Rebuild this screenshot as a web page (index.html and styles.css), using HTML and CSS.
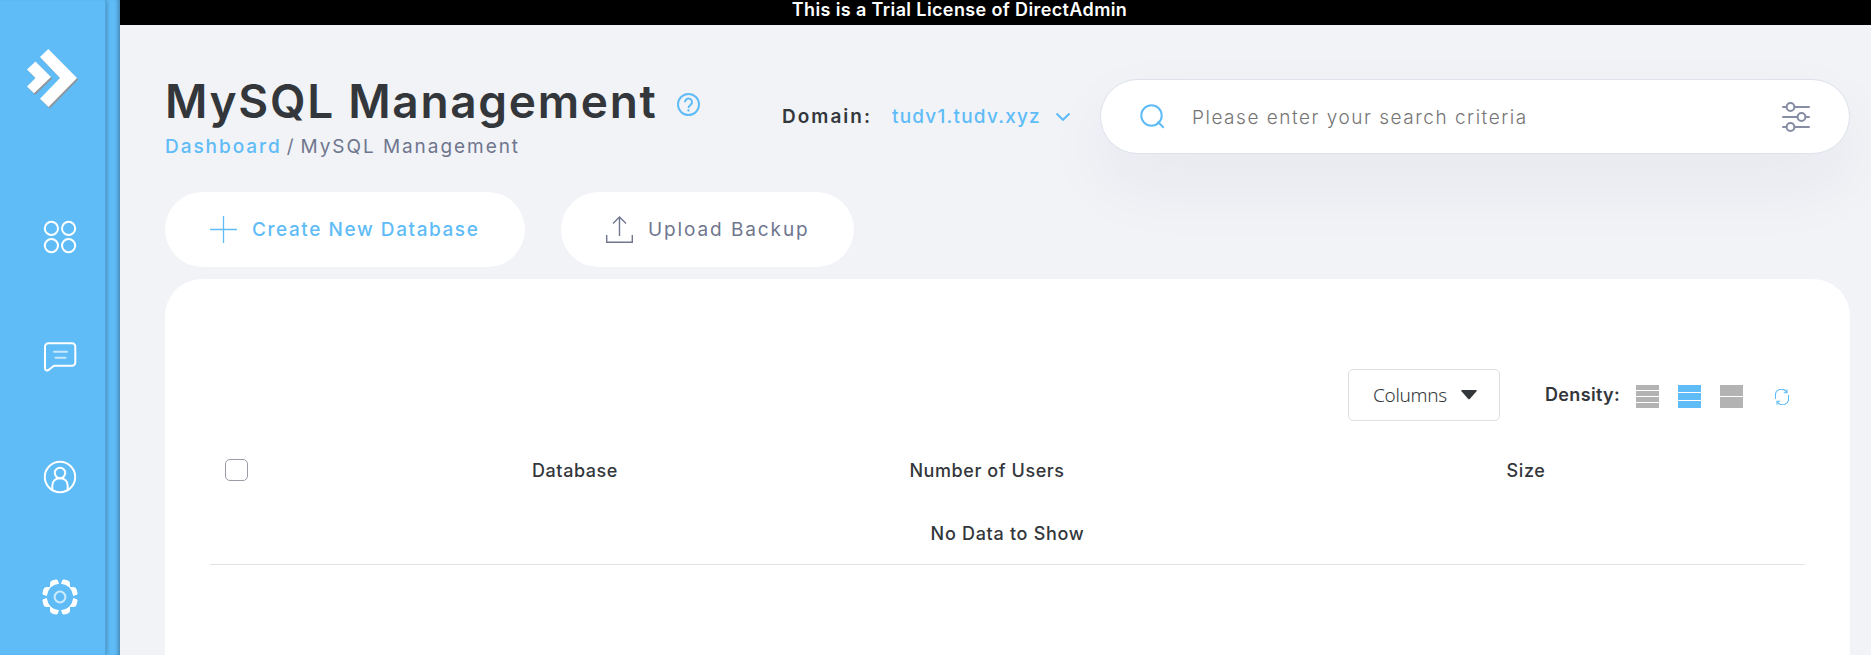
FILE: index.html
```html
<!DOCTYPE html>
<html lang="en">
<head>
<meta charset="utf-8">
<title>MySQL Management</title>
<link rel="stylesheet" href="styles.css">
</head>
<body>
<div class="app">
  <aside class="sidebar">
    <nav class="rail">
      <svg class="logo" width="54" height="63" viewBox="0 0 54 63">
        <g fill="#8f9599" transform="translate(1.2 1.5)"><path d="M23.3 2 52 31 23.5 60 15 51.7 35 31 15 10z"/><path d="M10.5 14.5 26 30 9 46.3 2 39.5 10.5 31 2 22.5z"/></g>
        <g fill="#fff"><path d="M23.3 2 52 31 23.5 60 15 51.7 35 31 15 10z"/><path d="M10.5 14.5 26 30 9 46.3 2 39.5 10.5 31 2 22.5z"/></g>
      </svg>
      <svg class="nav-icon" width="36" height="36" viewBox="0 0 36 36" fill="none" stroke="#fff" stroke-width="2"><circle cx="9.4" cy="9.4" r="6.6"/><circle cx="26.6" cy="9.4" r="6.6"/><circle cx="9.4" cy="26.6" r="6.6"/><circle cx="26.6" cy="26.6" r="6.6"/></svg>
      <svg class="nav-icon" width="36" height="36" viewBox="0 0 36 36" fill="none" stroke="#fff" stroke-width="2" stroke-linecap="round" stroke-linejoin="round"><path d="M6.5 4.300H30a3.300 3.300 0 0 1 3.300 3.300V23.400a3.300 3.300 0 0 1-3.300 3.300H12L6.500 31Q3 32.500 3 29V7.600A3.300 3.300 0 0 1 6.500 4.300z"/><path opacity=".65" d="M12 12.700h13M13.500 18.700h10"/></svg>
      <svg class="nav-icon" width="36" height="36" viewBox="0 0 36 36" fill="none" stroke="#fff" stroke-width="2"><circle cx="18" cy="18" r="15.200"/><circle cx="18" cy="14" r="5.200"/><path d="M10.300 30.500V27c0-4.800 3.200-7.800 7.700-7.800s7.700 3 7.700 7.800v3.500"/></svg>
      <svg class="nav-icon" width="36" height="36" viewBox="0 0 36 36" fill="none" stroke="#fff">
        <g fill="#fff" stroke="none"><path id="tooth" d="M19 4.800 20.300 1.200Q21 .3 22 .5L25.500 1.300Q28 2.200 28 4.200V8.800Q23.800 5.400 19 4.800z"/><use href="#tooth" transform="rotate(90 18 18)"/><use href="#tooth" transform="rotate(180 18 18)"/><use href="#tooth" transform="rotate(270 18 18)"/>
        <g transform="matrix(-1 0 0 1 36 0)"><use href="#tooth"/><use href="#tooth" transform="rotate(90 18 18)"/><use href="#tooth" transform="rotate(180 18 18)"/><use href="#tooth" transform="rotate(270 18 18)"/></g></g>
        <circle cx="18" cy="18" r="5.400" stroke-width="2" opacity=".7"/>
      </svg>
    </nav>
  </aside>
  <div class="page">
    <div class="license">This is a Trial License of DirectAdmin</div>
    <main class="main">
      <header class="head">
        <div class="heading">
          <div class="title-row">
            <h1 class="title">MySQL Management</h1>
            <svg class="help" width="24" height="24" viewBox="0 0 24 24" fill="none" stroke="#5fbcf7" stroke-width="2"><circle cx="11.500" cy="11.500" r="10.500"/><path d="M8 9.200a3.500 3.500 0 1 1 5.600 2.700c-1.200.9-2.100 1.500-2.100 3"/><path d="M11.500 16.300v2.200"/></svg>
          </div>
          <div class="crumbs"><a class="crumb-link">Dashboard</a><span>/</span><span class="crumb-here">MySQL Management</span></div>
        </div>
        <div class="domain">
          <span class="domain-label">Domain:</span>
          <span class="domain-value">tudv1.tudv.xyz</span>
          <svg width="16" height="10" viewBox="0 0 16 10" fill="none" stroke="#5fbcf7" stroke-width="2"><path d="m1.500 1.500 6.500 6.300 6.500-6.300"/></svg>
        </div>
        <div class="search">
          <svg width="25" height="25" viewBox="0 0 25 25" fill="none" stroke="#5fbcf7" stroke-width="2"><circle cx="11.500" cy="11.500" r="10.200"/><path d="m17.500 17.500 6.200 6.200"/></svg>
          <span class="search-text">Please enter your search criteria</span>
          <svg width="28" height="30" viewBox="0 0 28 30" fill="none" stroke="#858ca3" stroke-width="2" stroke-linecap="round"><path d="M1 5h3.500M12.500 5H27M1 15h14.500M23.500 15H27M1 25h3.500M12.500 25H27"/><circle cx="8.500" cy="5" r="3.900"/><circle cx="19.500" cy="15" r="3.900"/><circle cx="8.500" cy="25" r="3.900"/></svg>
        </div>
      </header>
      <div class="actions">
        <div class="action action-create">
          <svg width="27" height="27" viewBox="0 0 27 27" fill="none" stroke="#5fbcf7" stroke-width="1.300"><path d="M13.500 0v27M0 13.500h27"/></svg>
          <span>Create New Database</span>
        </div>
        <div class="action action-upload">
          <svg width="27" height="27" viewBox="0 0 27 27" fill="none" stroke="#6f768e" stroke-width="1.400"><path d="M.7 19v7.300h25.600V19M13.500 20V1M7 7.500 13.500 1 20 7.500"/></svg>
          <span>Upload Backup</span>
        </div>
      </div>
      <section class="card">
        <div class="tools">
          <div class="columns"><span class="columns-text">Columns</span><svg width="16" height="10" viewBox="0 0 16 10" fill="#33373b"><path d="M1 0h14q1.500 0 .5 1.300L9 8.800q-1 1-2 0L.5 1.300Q-.5 0 1 0z"/></svg></div>
          <span class="density">Density:</span>
          <div class="density-icons">
            <svg width="23" height="23" fill="#b3b3b3"><path d="M0 0h23v5H0zM0 6h23v5H0zM0 12h23v5H0zM0 18h23v5H0z"/></svg>
            <svg width="23" height="23" fill="#5fbcf7"><path d="M0 0h23v7H0zM0 8h23v7H0zM0 16h23v7H0z"/></svg>
            <svg width="23" height="23" fill="#b3b3b3"><path d="M0 0h23v11H0zM0 12h23v11H0z"/></svg>
          </div>
          <svg class="refresh" width="16" height="16" viewBox="0 0 16 16" fill="none" stroke="#5fbcf7" stroke-width="1.100"><path d="M1.500 10V7A6 6 0 0 1 12.500 3M13 .5v3.200H9.800M14.500 6V9A6 6 0 0 1 3.500 13M3 15.500V12.300h3.200"/></svg>
        </div>
        <div class="thead">
          <div class="cell-check"><span class="checkbox"></span></div>
          <div>Database</div>
          <div>Number of Users</div>
          <div>Size</div>
        </div>
        <div class="empty">No Data to Show</div>
      </section>
    </main>
  </div>
</div>
</body>
</html>
```
FILE: styles.css
```css
* { box-sizing: border-box; }
body { margin: 0; background: #f1f3f7; font-family: Inter, "Open Sans", sans-serif; font-size: 19px; color: #33373b; }
svg { display: block; flex: none; }
.app { display: flex; height: 655px; overflow: hidden; }
.sidebar { width: 120px; flex: none; background: #5fbcf7; box-shadow: inset -5px 0 5px -4px rgba(0,0,0,.4); }
.rail { width: 106px; height: 655px; padding: 47px 0 0 25px; display: flex; flex-direction: column; box-shadow: inset -1px 0 0 rgba(0,0,0,.12), 2px 0 4px -1px rgba(0,0,0,.25); }
.logo { margin-bottom: 109px; }
.nav-icon { margin: 0 0 84px 17px; }
.page { flex: 1; min-width: 0; }
.license { height: 25px; line-height: 20px; background: #000; color: #fff; text-align: center; padding-right: 72px; font-weight: 600; font-size: 18px; letter-spacing: .38px; }
.main { padding: 54px 21px 0 45px; }
.head { display: flex; height: 75px; white-space: nowrap; }
.heading { width: 617px; }
.title-row { display: flex; height: 44px; }
.title { margin: 0; width: 512px; font-size: 46px; line-height: 44px; font-weight: 600; letter-spacing: 1.7px; }
.help { margin-top: 14px; }
.crumbs { display: flex; gap: 5px; height: 24px; line-height: 24px; margin-top: 12px; color: #6f768e; letter-spacing: 1.95px; }
.crumb-link { color: #5fbcf7; font-weight: 500; }
.domain { width: 318px; display: flex; align-items: center; }
.domain-label { width: 110px; font-weight: 600; letter-spacing: 2px; }
.domain-value { width: 163px; color: #5fbcf7; font-weight: 500; letter-spacing: 1.2px; }
.search { width: 750px; height: 75px; border: 1px solid #dde1ea; border-radius: 38px; background: #fff; padding: 0 39px; display: flex; align-items: center; box-shadow: 0 30px 70px rgba(40,45,80,.055); }
.search-text { flex: 1; margin: 2px 0 0 27px; color: #757575; font-weight: 300; letter-spacing: 1.52px; }
.actions { display: flex; gap: 36px; margin-top: 38px; white-space: nowrap; }
.action { height: 75px; border-radius: 38px; background: #fff; padding-left: 45px; display: flex; align-items: center; gap: 15px; }
.action-create { width: 360px; color: #5fbcf7; font-weight: 500; letter-spacing: 1.57px; }
.action-upload { width: 293px; color: #6f768e; letter-spacing: 1.9px; }
.card { margin-top: 12px; height: 420px; background: #fff; border-radius: 37px 37px 0 0; padding: 90px 45px 0; }
.tools { display: flex; align-items: center; justify-content: flex-end; height: 52px; padding-right: 15px; white-space: nowrap; }
.columns { width: 152px; height: 52px; border: 1px solid #dfdfdf; border-radius: 5px; display: flex; align-items: center; padding-left: 24px; font: 19px "Noto Sans", "Open Sans", sans-serif; }
.columns-text { width: 88px; font-weight: 300; letter-spacing: -.3px; }
.density { margin: -2px 0 0 45px; width: 91px; font-size: 18px; font-weight: 600; letter-spacing: .35px; }
.density-icons { display: flex; gap: 19px; margin-top: 3px; }
.refresh { margin: 3px 0 0 31px; }
.thead { display: grid; grid-template-columns: 213px 304px 520px 558px; height: 44px; margin-top: 27px; align-items: center; text-align: center; font-weight: 500; font-size: 18px; letter-spacing: .57px; }
.cell-check { padding-left: 15px; }
.checkbox { display: block; width: 23px; height: 22px; border: 1px solid #9b9ba6; border-radius: 5px; }
.empty { height: 73px; line-height: 84px; text-align: center; border-bottom: 1px solid #e2e2e2; font-size: 18px; font-weight: 500; letter-spacing: .7px; }
```
